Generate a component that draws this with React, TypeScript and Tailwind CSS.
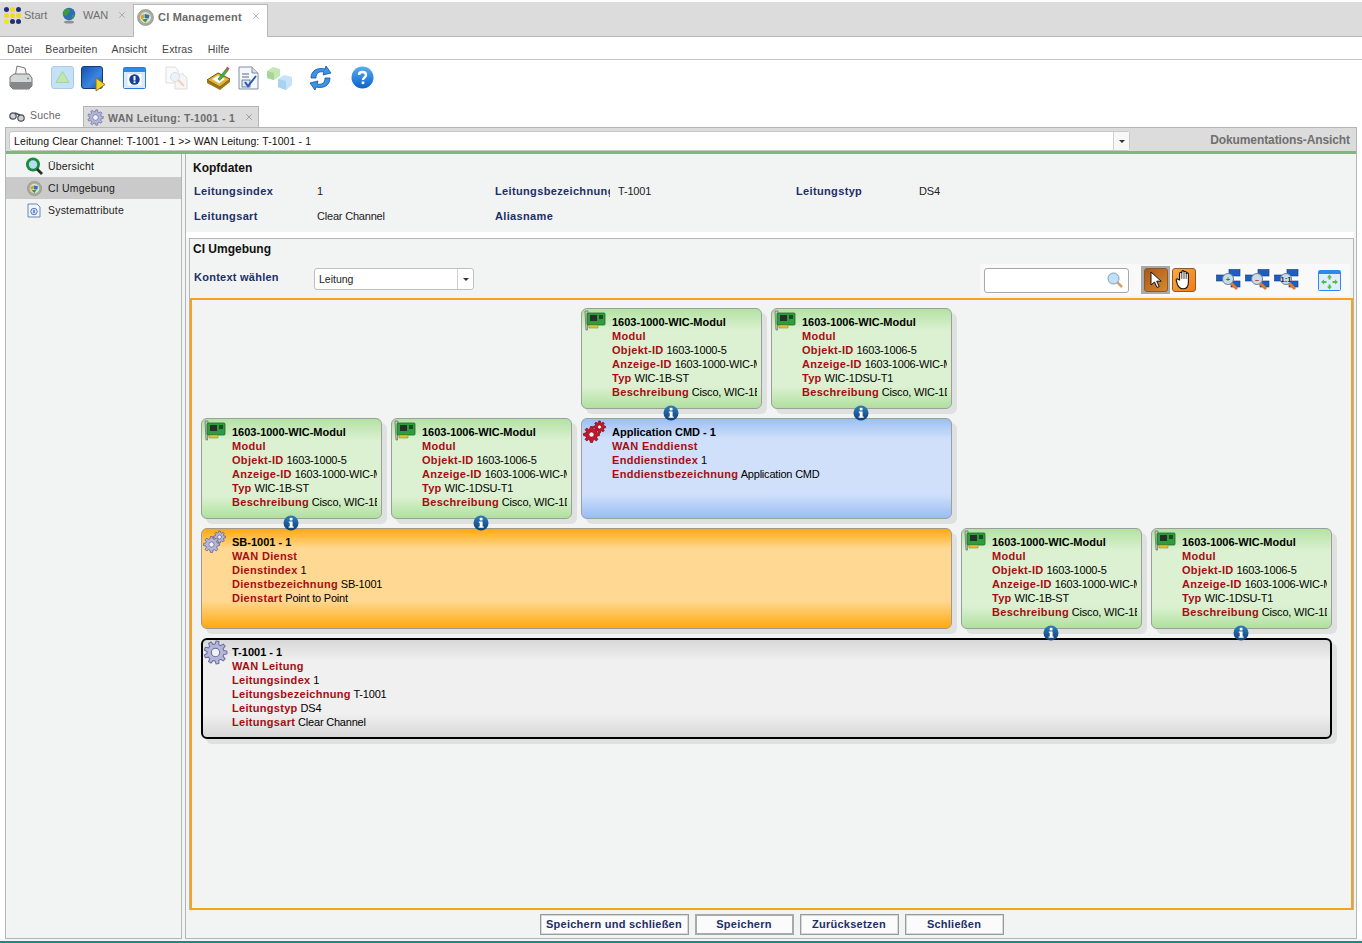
import type { ReactNode } from "react";
import { X } from "lucide-react";

const font = "font-['Liberation_Sans',Arial,sans-serif]";

function gearPath(cx: number, cy: number, r: number, teeth: number) {
  const pts: string[] = [];
  const inner = r * 0.74;
  for (let i = 0; i < teeth; i++) {
    const a = (i / teeth) * Math.PI * 2;
    const w = (Math.PI / teeth) * 0.5;
    [
      [inner, a - w * 1.3],
      [r, a - w * 0.7],
      [r, a + w * 0.7],
      [inner, a + w * 1.3],
    ].forEach(([d, t]) => pts.push(`${(cx + d * Math.cos(t)).toFixed(2)},${(cy + d * Math.sin(t)).toFixed(2)}`));
  }
  return `M${pts.join("L")}Z`;
}

function Gear({ color = "#b4b6d8", dark = "#6a6c9f", size = 20 }: { color?: string; dark?: string; size?: number }) {
  return (
    <svg width={size} height={size} viewBox="0 0 24 24">
      <path d={gearPath(12, 12, 11, 9)} fill={color} stroke={dark} strokeWidth="1" />
      <circle cx="12" cy="12" r="4" fill="#f0f0f5" stroke={dark} strokeWidth="1" />
    </svg>
  );
}

function TwoGears({ color, dark }: { color: string; dark: string }) {
  return (
    <svg width="24" height="24" viewBox="0 0 24 24">
      <path d={gearPath(16.5, 7, 6, 8)} fill={color} stroke={dark} strokeWidth="0.8" />
      <circle cx="16.5" cy="7" r="2" fill="#f4f0f0" stroke={dark} strokeWidth="0.7" />
      <path d={gearPath(8.5, 14.5, 8, 8)} fill={color} stroke={dark} strokeWidth="0.8" />
      <circle cx="8.5" cy="14.5" r="2.6" fill="#f4f0f0" stroke={dark} strokeWidth="0.7" />
    </svg>
  );
}

function CardIcon() {
  return (
    <svg width="23" height="22" viewBox="0 0 23 22">
      <path d="M2 1h3l-.5 19H3z" fill="#c9ccc4" stroke="#6d7368" strokeWidth="0.8" />
      <rect x="4" y="3" width="18" height="12" rx="1" fill="#2f9c3d" stroke="#1e6b2a" strokeWidth="0.8" />
      <rect x="7" y="5" width="7" height="6" fill="#25302a" />
      <rect x="16" y="5" width="4" height="4" fill="#174d20" />
      <path d="M6 15h9v3H6z" fill="#d9c43c" stroke="#8d7f1e" strokeWidth="0.5" />
    </svg>
  );
}

function InfoDot() {
  return (
    <svg width="16" height="16" viewBox="0 0 16 16">
      <defs>
        <linearGradient id="infoDotFill" x1="0" y1="0" x2="0" y2="1">
          <stop offset="0" stopColor="#2f7ebc" />
          <stop offset="1" stopColor="#0f3f78" />
        </linearGradient>
      </defs>
      <circle cx="8" cy="8" r="7.5" fill="url(#infoDotFill)" />
      <rect x="6.6" y="2.8" width="3" height="2.6" rx="1" fill="#fff" />
      <path d="M5.8 6.4h3.8v5h1.1v1.4H5.6v-1.4h1.1V7.8h-.9z" fill="#fff" />
    </svg>
  );
}

type NodeKind = "green" | "blue" | "orange" | "gray";

const nodeBg: Record<NodeKind, string> = {
  green: "border border-[#9a9f9a] bg-[linear-gradient(180deg,#b4e2a4_0%,#dcf1d2_22%,#dcf1d2_78%,#b0e09f_100%)]",
  blue: "border border-[#9a9f9f] bg-[linear-gradient(180deg,#9cbff4_0%,#d0e0fa_20%,#d0e0fa_76%,#98bcf3_100%)]",
  orange: "border border-[#a29a88] bg-[linear-gradient(180deg,#ffa90f_0%,#ffd993_20%,#ffd993_72%,#ffa90f_100%)]",
  gray: "border-2 border-black bg-[linear-gradient(180deg,#d8d8d8_0%,#f0f0f0_22%,#f0f0f0_76%,#d8d8d8_100%)]",
};

type Field = [string, string];

function DiagramNode({ kind, title, type, fields, icon, info, pos }: { kind: NodeKind; title: string; type: string; fields: Field[]; icon: ReactNode; info?: string; pos: string }) {
  return (
    <div className={`absolute ${pos}`}>
      <div className={`h-full w-full overflow-hidden rounded-[6px] shadow-[5px_5px_0_#dfe1e0] ${nodeBg[kind]}`}>
        <div className="absolute left-[2px] top-[2px]">{icon}</div>
        <div className="absolute left-[31px] right-[5px] top-[7px] overflow-hidden text-[11px] leading-[14px] text-black">
          <div className="whitespace-nowrap font-bold">{title}</div>
          <div className="whitespace-nowrap font-bold tracking-[0.3px] text-[#a80c12]">{type}</div>
          {fields.map(([k, v]) => (
            <div key={k} className="whitespace-nowrap tracking-[-0.2px]">
              <span className="font-bold tracking-[0.3px] text-[#a80c12]">{k}</span> {v}
            </div>
          ))}
        </div>
      </div>
      {info ? (
        <div className={`absolute bottom-[-12px] z-10 ${info}`}>
          <InfoDot />
        </div>
      ) : null}
    </div>
  );
}

function ModulNode({ id, anzeige, typ, desc, pos }: { id: string; anzeige: string; typ: string; desc: string; pos: string }) {
  return (
    <DiagramNode
      kind="green"
      title={`${id}-WIC-Modul`}
      type="Modul"
      icon={<CardIcon />}
      info="left-[82px]"
      pos={`h-[101px] w-[181px] ${pos}`}
      fields={[
        ["Objekt-ID", `${id}-5`],
        ["Anzeige-ID", anzeige],
        ["Typ", typ],
        ["Beschreibung", desc],
      ]}
    />
  );
}

function AppTab({ label, icon, close, active, w, gap }: { label: string; icon: ReactNode; close?: boolean; active?: boolean; w: string; gap: string }) {
  return (
    <div className={`relative flex items-center ${w} ${active ? "z-10 -mb-px h-[33px] border border-b-0 border-[#b8b8b8] bg-white pb-[8px] pl-[1px] font-bold text-[#6a6a6a]" : "h-[32px] pb-[9px] text-[#6f6f6f]"}`}>
      <div className="flex w-[20px] justify-center">{icon}</div>
      <span className={`${gap} text-[11px] ${active ? "tracking-[0.2px]" : ""}`}>{label}</span>
      {close ? <X className="absolute right-[6px] top-[6px] text-[#8a8a8a]" size={10} strokeWidth={1.4} /> : null}
    </div>
  );
}

function StartIcon() {
  const dots = ["#1f2f7a", "#f1d91f", "#1f2f7a", "#f1d91f", "#f1d91f", "#f1d91f", "#f1e51f", "#1f2f7a", "#1f2f7a"];
  return (
    <div className="grid grid-cols-3 gap-[1px]">
      {dots.map((c, i) => (
        <svg key={i} width="5" height="5" viewBox="0 0 4 4">
          <circle cx="2" cy="2" r="2" fill={c} />
        </svg>
      ))}
    </div>
  );
}

function GlobeIcon() {
  return (
    <svg width="16" height="17" viewBox="0 0 16 17">
      <ellipse cx="8" cy="15" rx="5" ry="1.6" fill="#8d9194" />
      <circle cx="8" cy="7" r="6.2" fill="#2a6fb8" />
      <path d="M5 2c2-1 4 0 4 2s-2 2-3 4-3 0-4-1 1-4 3-5zM11 8l2.5-.5c0 2-1 3.5-3 4.5z" fill="#3f9a3c" />
    </svg>
  );
}

function CiIcon({ size = 17 }: { size?: number }) {
  return (
    <svg width={size} height={size} viewBox="0 0 17 17">
      <circle cx="8.5" cy="8.5" r="8" fill="#a9ac9c" stroke="#7f8376" strokeWidth="0.6" />
      <circle cx="8.5" cy="8.5" r="5.4" fill="#dfe0d4" />
      <path d="M4 6.500l3.500-1.500v4l-3.500 1z" fill="#d9a320" />
      <path d="M7.800 5l4.700 1-.8 3.500-3.900-.5z" fill="#2c6fc0" />
      <path d="M5 10.500l6-1-2.500 4z" fill="#2f9a3c" />
    </svg>
  );
}

function ToolIcons() {
  return (
    <div className="relative h-[45px] w-full">
      <svg className="absolute left-[8px] top-[5px]" width="26" height="26" viewBox="0 0 26 26">
        <path d="M9 1l8 2 2 9H7z" fill="#f8f8f8" stroke="#7a7a7a" />
        <path d="M2 12l4-3h15l3 4v8l-3 3H5l-3-3z" fill="#d4d6d8" stroke="#777" />
        <path d="M2 17h22v4l-3 3H5l-3-3z" fill="#85888b" />
        <circle cx="20" cy="13.5" r="1" fill="#40b050" />
      </svg>
      <svg className="absolute left-[51px] top-[6px]" width="23" height="23" viewBox="0 0 23 23">
        <rect x="0.5" y="0.5" width="22" height="22" rx="2.5" fill="#c5e1f8" stroke="#a9cbe6" />
        <path d="M11.5 5.5l6.5 11H5z" fill="#bfe7b0" stroke="#a3d49a" />
      </svg>
      <svg className="absolute left-[81px] top-[6px]" width="25" height="26" viewBox="0 0 25 26">
        <defs>
          <linearGradient id="playFill" x1="0" y1="0" x2="1" y2="1">
            <stop offset="0" stopColor="#1450b0" />
            <stop offset="0.6" stopColor="#3b86e0" />
            <stop offset="1" stopColor="#1450b0" />
          </linearGradient>
        </defs>
        <rect x="0.5" y="0.5" width="21" height="22" rx="2.5" fill="url(#playFill)" stroke="#163a75" />
        <path d="M15 12l9 6.5-9 6.5z" fill="#f3d22a" stroke="#8a7414" />
      </svg>
      <svg className="absolute left-[123px] top-[7px]" width="23" height="22" viewBox="0 0 23 22">
        <rect x="0.5" y="0.5" width="22" height="21" rx="1" fill="#dcebfb" stroke="#2a7de0" />
        <rect x="1" y="1" width="21" height="4" fill="#2a8bea" />
        <rect x="4" y="6.5" width="15" height="12.5" fill="#fff" stroke="#c3d6ea" strokeWidth="0.6" />
        <circle cx="11.5" cy="12.5" r="5.2" fill="#123d99" />
        <rect x="10.5" y="9" width="2" height="4.5" fill="#fff" />
        <rect x="10.5" y="14.3" width="2" height="1.8" fill="#fff" />
      </svg>
      <svg className="absolute left-[165px] top-[6px]" width="24" height="24" viewBox="0 0 24 24" opacity="0.45">
        <path d="M1 1h9l3 3v13H1z" fill="#f6f6f6" stroke="#b5b5b5" />
        <path d="M10 8h8l4 4v11H10z" fill="#ececec" stroke="#b5b5b5" />
        <circle cx="10" cy="11" r="4.5" fill="#d5e6f4" stroke="#a4b5c8" />
        <path d="M13 14l6 6" stroke="#d9a06a" strokeWidth="2" />
      </svg>
      <svg className="absolute left-[206px] top-[5px]" width="26" height="26" viewBox="0 0 26 26">
        <path d="M1 15l11-7 12 6-10 8z" fill="#e5b52e" stroke="#6d4f0e" />
        <path d="M1 15v3l13 7 10-8v-3l-10 8z" fill="#9a7418" />
        <path d="M6 14l6-3.5 7 3.5-6 4.5z" fill="#fff" stroke="#c8c8c8" strokeWidth="0.5" />
        <path d="M12 14l8-10 2 1.500-8 10z" fill="#43b244" stroke="#26702a" strokeWidth="0.6" />
        <path d="M20 4l1-2.500 2.500 2-1.500 2z" fill="#d84242" />
      </svg>
      <svg className="absolute left-[238px] top-[6px]" width="23" height="25" viewBox="0 0 23 25">
        <path d="M1 1h13l6 6v16H1z" fill="#f5f7fb" stroke="#7f8fa8" />
        <path d="M14 1v6h6" fill="#d5dce8" stroke="#7f8fa8" />
        <path d="M4 8h7M4 11h7" stroke="#586a90" strokeWidth="1.2" />
        <rect x="4" y="14" width="8" height="7" fill="#dce6f6" stroke="#586a90" strokeWidth="0.8" />
        <path d="M7 16l3 4 8-10" fill="none" stroke="#2a5aa8" strokeWidth="2" />
      </svg>
      <svg className="absolute left-[266px] top-[6px]" width="27" height="25" viewBox="0 0 27 25">
        <path d="M1 5l6-4 7 2v7l-6 4-7-2z" fill="#c3e8b5" />
        <path d="M1 5l7 2v7l-7-2z" fill="#a7d698" />
        <path d="M12 13l6-4 8 2v8l-6 5-8-3z" fill="#c6e3f7" />
        <path d="M12 13l8 2v9l-8-3z" fill="#a8d2ef" />
      </svg>
      <svg className="absolute left-[308px] top-[5px]" width="25" height="26" viewBox="0 0 25 26">
        <path d="M3 13C3 6 9 2 17 4l1-3 5 7-8 2 1-3C11 6 8 8 8 13z" fill="#3a94e8" stroke="#124f9e" strokeWidth="0.8" />
        <path d="M22 13c0 7-6 11-14 9l-1 3-5-7 8-2-1 3c5 1 8-1 8-6z" fill="#3a94e8" stroke="#124f9e" strokeWidth="0.8" />
      </svg>
      <svg className="absolute left-[351px] top-[6px]" width="23" height="23" viewBox="0 0 23 23">
        <defs>
          <linearGradient id="helpFill" x1="0" y1="0" x2="0" y2="1">
            <stop offset="0" stopColor="#57aef2" />
            <stop offset="1" stopColor="#0a62c8" />
          </linearGradient>
        </defs>
        <circle cx="11.5" cy="11.5" r="11" fill="url(#helpFill)" />
        <path d="M8 9c0-2 1.500-3 3.500-3S15 7 15 9c0 2.500-3 2.500-3 5" fill="none" stroke="#fff" strokeWidth="2.4" />
        <rect x="10.7" y="15.5" width="2.6" height="2.6" fill="#fff" />
      </svg>
    </div>
  );
}

function SideRow({ icon, label, active }: { icon: ReactNode; label: string; active?: boolean }) {
  return (
    <div className={`flex h-[22px] items-center ${active ? "bg-[#cacaca]" : ""}`}>
      <div className="ml-[18px] flex w-[20px] justify-center">{icon}</div>
      <span className="ml-[4px] pt-[2px] text-[10.5px] tracking-[0.2px] text-[#222]">{label}</span>
    </div>
  );
}

function HeadField({ label, value, w }: { label: string; value?: string; w: string }) {
  return (
    <div className={`flex ${w} text-[11px]`}>
      <span className="mr-[8px] w-[115px] shrink-0 overflow-hidden whitespace-nowrap font-bold tracking-[0.35px] text-[#1c2f67]">{label}</span>
      <span className="tracking-[-0.2px] text-[#222]">{value}</span>
    </div>
  );
}

function OrangeDot({ children, selected }: { children: ReactNode; selected?: boolean }) {
  return (
    <div className={`flex h-[28px] items-center justify-center ${selected ? "w-[29px] bg-[#a9a9a9]" : "w-[28px]"}`}>
      <div className={`flex h-[24px] w-[24px] items-center justify-center rounded-[3px] border border-[#8a5a2b] ${selected ? "bg-[linear-gradient(135deg,#a9561a,#d98a2a)]" : "bg-[linear-gradient(135deg,#f7a94a,#f47c10)]"}`}>
        {children}
      </div>
    </div>
  );
}

function ZoomGraph({ mark, markColor }: { mark: string; markColor: string }) {
  return (
    <svg width="25" height="22" viewBox="0 0 25 22">
      <rect x="0.5" y="6" width="9" height="6" fill="#1d5fc0" stroke="#123a7a" strokeWidth="0.6" />
      <rect x="13" y="0.5" width="11" height="6.5" fill="#1d5fc0" stroke="#123a7a" strokeWidth="0.6" />
      <rect x="15" y="12" width="9" height="6" fill="#1d5fc0" stroke="#123a7a" strokeWidth="0.6" />
      <path d="M15 14l6 6" stroke="#e8762a" strokeWidth="3" />
      <circle cx="12" cy="10" r="5.5" fill="#c9dcea" stroke="#6d7f94" />
      <text x="12" y="12.5" textAnchor="middle" fontSize="7.5" fontWeight="700" fill={markColor} fontFamily="Liberation Sans">{mark}</text>
    </svg>
  );
}

const pageBtn = "flex h-[21px] items-center justify-center border border-[#9a9a9a] bg-[#fbfbfb] text-[11px] font-bold tracking-[0.25px] text-[#1c2f67] shadow-[inset_0_0_0_1px_#d6d9d8]";

export default function App() {
  return (
    <div className={`${font} h-[943px] w-[1362px] overflow-hidden bg-white text-[11px] text-[#222]`}>
      <div className="mt-[2px] flex h-[35px] items-end border-b border-[#b8b8b8] bg-[#dcdcdc] pl-[2px]">
        <AppTab w="w-[57px]" gap="ml-[2px]" label="Start" icon={<StartIcon />} />
        <AppTab w="w-[74px]" gap="ml-[4px]" label="WAN" icon={<GlobeIcon />} close />
        <AppTab w="w-[135px]" gap="ml-[3px]" label="CI Management" icon={<CiIcon />} close active />
      </div>

      <div className="flex h-[23px] items-center gap-[13px] border-b border-[#c4c4c4] pl-[7px] pt-[3px] text-[10.5px] tracking-[0.15px] text-[#444]">
        <span>Datei</span>
        <span>Bearbeiten</span>
        <span className="ml-[1px]">Ansicht</span>
        <span className="ml-[2px]">Extras</span>
        <span className="ml-[2px]">Hilfe</span>
      </div>

      <ToolIcons />

      <div className="flex h-[22px] items-end pl-[8px]">
        <div className="mb-[1px] flex h-[21px] w-[75px] items-center pl-[1px] text-[#666]">
          <svg width="16" height="12" viewBox="0 0 16 12">
            <circle cx="4" cy="6" r="3.2" fill="#cdd3d8" stroke="#4a4f55" strokeWidth="1.2" />
            <circle cx="12" cy="8" r="3.2" fill="#cdd3d8" stroke="#4a4f55" strokeWidth="1.2" />
            <path d="M6 3l5 2" stroke="#4a4f55" strokeWidth="1.5" />
          </svg>
          <span className="ml-[5px] text-[10.5px] tracking-[0.2px]">Suche</span>
        </div>
        <div className="relative flex h-[21px] w-[176px] items-center border border-b-0 border-[#b5b5b5] bg-[#dcdcdc] pl-[3px] font-bold text-[#6b6b6b]">
          <Gear size={17} />
          <span className="ml-[4px] pt-[3px] text-[10.5px] tracking-[0.33px]">WAN Leitung: T-1001 - 1</span>
          <X className="absolute right-[4px] top-[5px] text-[#777]" size={10} strokeWidth={1.4} />
        </div>
      </div>

      <div className="mx-[5px] flex h-[812px] flex-col border-x border-[#b5b5b5] bg-[#f2f4f3]">
        <div className="flex h-[24px] shrink-0 items-end border-t border-[#b5b5b5] bg-[#dcdcdc] pl-[3px] pr-[6px]">
          <div className="flex h-[20px] w-[1121px] items-center rounded-[3px] border border-[#c8c8c8] bg-white">
            <span className="flex-1 pl-[4px] pt-[2px] text-[10.5px] tracking-[0.1px] text-[#111]">Leitung Clear Channel: T-1001 - 1 &gt;&gt; WAN Leitung: T-1001 - 1</span>
            <div className="flex h-full w-[16px] items-center justify-center border-l border-[#d0d0d0] bg-[#f7f7f7]">
              <div className="h-0 w-0 border-x-[3px] border-t-[3px] border-x-transparent border-t-[#333]" />
            </div>
          </div>
          <span className="ml-auto self-center pt-[1px] text-[12px] font-bold tracking-[-0.1px] text-[#6f6f6f]">Dokumentations-Ansicht</span>
        </div>
        <div className="h-[3px] shrink-0 bg-[#7fb77f]" />

        <div className="flex min-h-0 flex-1">
          <div className="w-[176px] shrink-0 border-b border-r border-[#b5b5b5] pt-[1px]">
            <SideRow label="Übersicht" icon={
              <svg width="18" height="18" viewBox="0 0 18 18">
                <circle cx="8" cy="7.5" r="7" fill="#1c8a3c" />
                <circle cx="8" cy="7.5" r="4.2" fill="#b7dcf3" />
                <path d="M12 12l5 5" stroke="#2b2f2b" strokeWidth="2.8" />
              </svg>
            } />
            <SideRow label="CI Umgebung" icon={<CiIcon size={15} />} active />
            <SideRow label="Systemattribute" icon={
              <svg width="14" height="15" viewBox="0 0 14 15">
                <path d="M1 1h9l3 3v10H1z" fill="#f0f5fc" stroke="#6f86ad" />
                <circle cx="7" cy="8.5" r="3.2" fill="#dbe8f7" stroke="#4e7cc0" />
                <rect x="6.4" y="6.8" width="1.2" height="3.4" fill="#2a5aa8" />
              </svg>
            } />
          </div>

          <div className="ml-[3px] flex min-w-0 flex-1 flex-col border-b border-l border-[#b5b5b5]">
            <div className="h-[78px] shrink-0 pl-[7px] pt-[7px]">
              <div className="text-[12px] font-bold leading-[15px] text-[#111]">Kopfdaten</div>
              <div className="mt-[7px] flex h-[16px] items-center pl-[1px]">
                <HeadField w="w-[301px]" label="Leitungsindex" value="1" />
                <HeadField w="w-[301px]" label="Leitungsbezeichnung" value="T-1001" />
                <HeadField w="w-[250px]" label="Leitungstyp" value="DS4" />
              </div>
              <div className="mt-[9px] flex h-[16px] items-center pl-[1px]">
                <HeadField w="w-[301px]" label="Leitungsart" value="Clear Channel" />
                <HeadField w="w-[301px]" label="Aliasname" />
              </div>
            </div>
            <div className="mr-[2px] h-[6px] shrink-0 bg-white" />

            <div className="ml-[3px] mr-[2px] flex h-[672px] shrink-0 flex-col border-x border-t border-[#b5b5b5]">
              <div className="h-[21px] shrink-0 pl-[3px] pt-[3px] text-[12px] font-bold leading-[15px] text-[#111]">CI Umgebung</div>

              <div className="flex h-[38px] shrink-0 items-center">
                <span className="mb-[4px] ml-[4px] w-[120px] text-[11px] font-bold tracking-[0.25px] text-[#1c2f67]">Kontext wählen</span>
                <div className="flex h-[22px] w-[160px] items-center rounded-[3px] border border-[#c0c0c0] bg-white">
                  <span className="flex-1 pl-[4px] pt-[2px] text-[10.5px] text-[#222]">Leitung</span>
                  <div className="flex h-full w-[16px] items-center justify-center border-l border-[#d0d0d0]">
                    <div className="h-0 w-0 border-x-[3px] border-t-[3px] border-x-transparent border-t-[#333]" />
                  </div>
                </div>

                <div className="ml-auto mr-[3px] mt-[2px] flex h-[32px] items-center rounded-[3px] bg-[#f8f9f8] pl-[4px]">
                  <div className="flex h-[25px] w-[145px] items-center justify-end rounded-[3px] border border-[#a8a8a8] bg-white pr-[4px]">
                    <svg width="18" height="18" viewBox="0 0 18 18">
                      <path d="M11 11l5 5" stroke="#d9a06a" strokeWidth="2.5" />
                      <circle cx="7.5" cy="7.5" r="5.5" fill="#bfe0f6" stroke="#7f9db8" />
                    </svg>
                  </div>
                  <div className="ml-[12px] flex items-center">
                    <OrangeDot selected>
                      <svg width="14" height="18" viewBox="0 0 14 18">
                        <path d="M2 1v13l3.500-3 2.500 5.500 2.200-1-2.500-5.300h4.500z" fill="#fff" stroke="#111" strokeWidth="1" />
                      </svg>
                    </OrangeDot>
                    <OrangeDot>
                      <svg width="20" height="22" viewBox="0 0 18 20">
                        <path d="M5 10V4a1 1 0 012 0V2.500a1 1 0 012 0V3a1 1 0 012 0v1.500a1 1 0 012 0V12c0 4-2 6-5 6-2.500 0-3.500-1-5-4L2 10.500c-.6-1 .7-2 1.500-1.200z" fill="#fff" stroke="#111" strokeWidth="1" />
                        <path d="M7 4v5M9 3v6M11 4v5" stroke="#111" strokeWidth="0.7" />
                      </svg>
                    </OrangeDot>
                  </div>
                  <div className="ml-[18px] flex items-center gap-[4px]">
                    <ZoomGraph mark="+" markColor="#0a9a2a" />
                    <ZoomGraph mark="–" markColor="#c01a1a" />
                    <ZoomGraph mark="1:1" markColor="#1a2a4a" />
                  </div>
                  <svg className="ml-[19px] mr-[9px]" width="23" height="21" viewBox="0 0 23 21">
                    <rect x="0.5" y="0.5" width="22" height="20" rx="1" fill="#e3ecfa" stroke="#2a8bea" />
                    <rect x="1" y="1" width="21" height="3" fill="#2a8bea" />
                    <path d="M11.500 4.500l2.500 3h-1.500v2h-2v-2H9zM11.500 19.500l2.500-3h-1.500v-2h-2v2H9zM3 12l3-2.500v1.500h2.500v2H6v1.500zM20 12l-3-2.500v1.500h-2.500v2H17v1.500z" fill="#4cc04c" />
                  </svg>
                </div>
              </div>

              <div className="relative min-h-0 flex-1 border-2 border-[#f7a21b]">
                <ModulNode pos="left-[389px] top-[8px]" id="1603-1000" anzeige="1603-1000-WIC-Modul" typ="WIC-1B-ST" desc="Cisco, WIC-1B-ST" />
                <ModulNode pos="left-[579px] top-[8px]" id="1603-1006" anzeige="1603-1006-WIC-Modul" typ="WIC-1DSU-T1" desc="Cisco, WIC-1DSU-T1" />
                <ModulNode pos="left-[9px] top-[118px]" id="1603-1000" anzeige="1603-1000-WIC-Modul" typ="WIC-1B-ST" desc="Cisco, WIC-1B-ST" />
                <ModulNode pos="left-[199px] top-[118px]" id="1603-1006" anzeige="1603-1006-WIC-Modul" typ="WIC-1DSU-T1" desc="Cisco, WIC-1DSU-T1" />
                <DiagramNode
                  kind="blue"
                  pos="left-[389px] top-[118px] h-[101px] w-[371px]"
                  title="Application CMD - 1"
                  type="WAN Enddienst"
                  icon={<TwoGears color="#c8152a" dark="#7d0d1a" />}
                  fields={[
                    ["Enddienstindex", "1"],
                    ["Enddienstbezeichnung", "Application CMD"],
                  ]}
                />
                <DiagramNode
                  kind="orange"
                  pos="left-[9px] top-[228px] h-[101px] w-[751px]"
                  title="SB-1001 - 1"
                  type="WAN Dienst"
                  icon={<TwoGears color="#b4b6d8" dark="#5d5f95" />}
                  fields={[
                    ["Dienstindex", "1"],
                    ["Dienstbezeichnung", "SB-1001"],
                    ["Dienstart", "Point to Point"],
                  ]}
                />
                <ModulNode pos="left-[769px] top-[228px]" id="1603-1000" anzeige="1603-1000-WIC-Modul" typ="WIC-1B-ST" desc="Cisco, WIC-1B-ST" />
                <ModulNode pos="left-[959px] top-[228px]" id="1603-1006" anzeige="1603-1006-WIC-Modul" typ="WIC-1DSU-T1" desc="Cisco, WIC-1DSU-T1" />
                <DiagramNode
                  kind="gray"
                  pos="left-[9px] top-[338px] h-[101px] w-[1131px]"
                  title="T-1001 - 1"
                  type="WAN Leitung"
                  icon={<Gear size={25} />}
                  fields={[
                    ["Leitungsindex", "1"],
                    ["Leitungsbezeichnung", "T-1001"],
                    ["Leitungstyp", "DS4"],
                    ["Leitungsart", "Clear Channel"],
                  ]}
                />
              </div>
            </div>

            <div className="flex h-[28px] shrink-0 items-center justify-center gap-[6px] pl-[1px]">
              <div className={`${pageBtn} w-[149px]`}>Speichern und schließen</div>
              <div className={`${pageBtn} w-[99px] border-2 border-[#a9a9a9] shadow-none`}>Speichern</div>
              <div className={`${pageBtn} w-[99px]`}>Zurücksetzen</div>
              <div className={`${pageBtn} w-[99px]`}>Schließen</div>
            </div>
          </div>
        </div>
      </div>
      <div className="h-[2px] bg-[#f2f4f3]" />
      <div className="h-[2px] bg-[#0f8f7f]" />
    </div>
  );
}
